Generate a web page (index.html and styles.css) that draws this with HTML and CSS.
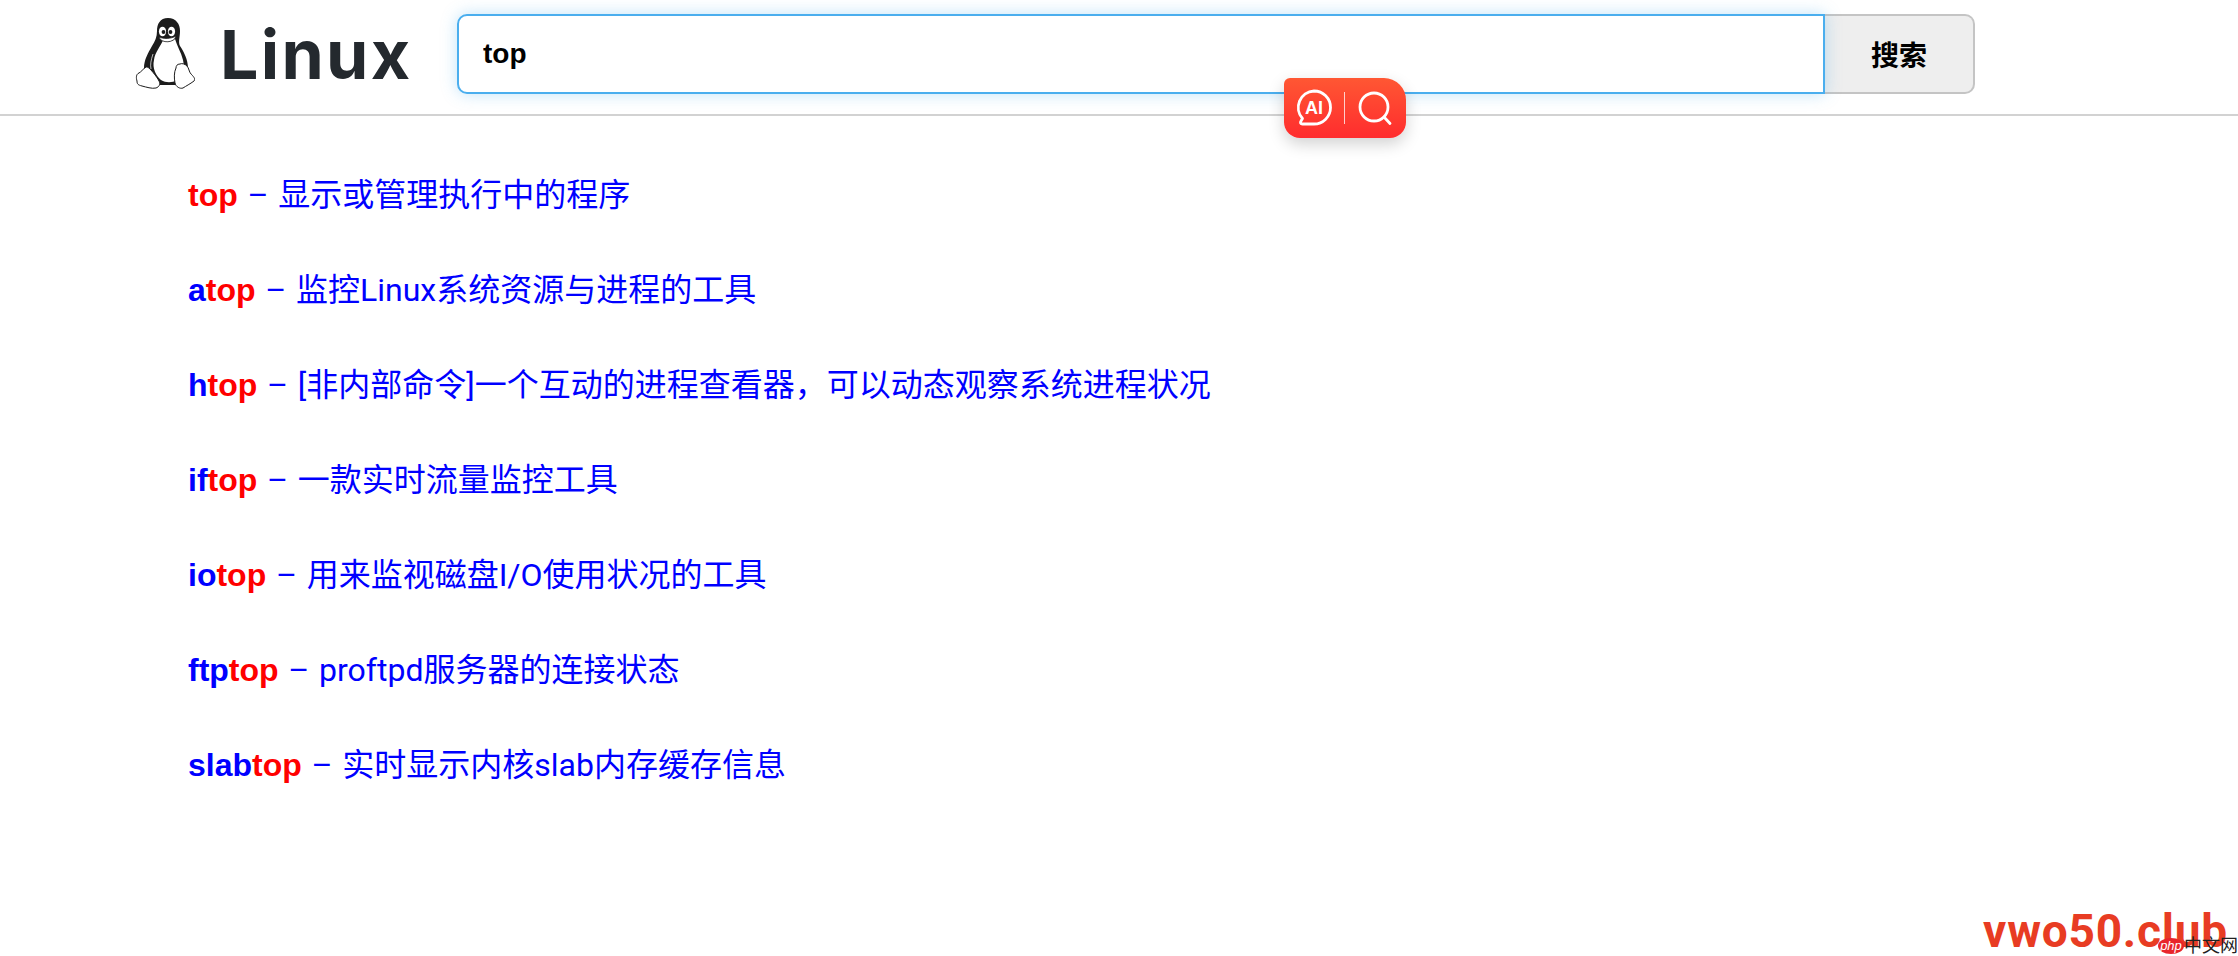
FILE: index.html
```html
<!DOCTYPE html>
<html lang="zh-CN">
<head>
<meta charset="utf-8">
<title>Linux top</title>
<link rel="stylesheet" href="styles.css">
</head>
<body>
<header class="topbar">
  <a class="brand" href="#">
    <svg class="tux" viewBox="5 8 60 72" aria-hidden="true">
      <path d="M38 8C30 8 27 14 27 21c0 6-2 10-5 15-4 7-8 14-8 22l2 4 14 13h17l11-17c0-8-4-16-8-22-2-4 0-9 0-15 0-7-4-13-12-13z" fill="#1c1c1c"/>
      <path d="M33 30c3 2 9 2 12-1 2 7 6 13 8 21 2 8-1 16-6 20-5 3-11 3-16 0-5-4-9-12-7-20 1-8 7-14 9-20z" fill="#fff"/>
      <path d="M23 44c-2 6-3 11-2 15" fill="none" stroke="#fff" stroke-width=".7"/>
      <ellipse cx="32.500" cy="21.500" rx="3.600" ry="4.800" fill="#fff"/>
      <ellipse cx="41.500" cy="21.500" rx="3.600" ry="4.800" fill="#fff"/>
      <circle cx="33.500" cy="22" r="1.900" fill="#1c1c1c"/>
      <circle cx="40.500" cy="22" r="1.900" fill="#1c1c1c"/>
      <path d="M29 27c4 2 12 2 17-1-1 7-15 8-17 1z" fill="#fff" stroke="#1c1c1c" stroke-width=".8"/>
      <path d="M16 57c-3 2-5 5-7 6-3 1-3 5-2 8 0 3 1 4 5 5 4 1 10 3 14 2 3-1 5-4 3-7-2-4-7-10-9-12-2-2-3-2-4-2z" fill="#fff" stroke="#1c1c1c" stroke-width="1"/>
      <path d="M50 54c-3 0-4 2-4 4-2 4-2 10-1 15 1 4 5 6 8 5 3-2 7-4 11-7 2-2-1-5-3-7-2-2-2-6-4-8-2-2-5-3-7-2z" fill="#fff" stroke="#1c1c1c" stroke-width="1"/>
    </svg>
    <h1 class="brand-name">Linux</h1>
  </a>
  <form class="search">
    <input class="search-input" type="text" value="top">
    <button class="search-btn" type="button">搜索</button>
  </form>
</header>
<div class="ai-widget">
  <svg class="ai-bubble" viewBox="0 0 40 40" aria-hidden="true">
    <path d="M20 3a16.500 16.500 0 1 1 0 33H8.500c-2 0-2.500-1.500-1.500-3l1.500-2.500A16.500 16.500 0 0 1 20 3z" fill="none" stroke="#fff" stroke-width="2.800" stroke-linejoin="round"/>
    <text class="ai-text" x="20" y="26" text-anchor="middle">AI</text>
  </svg>
  <span class="ai-sep"></span>
  <svg class="ai-lens" viewBox="0 0 36 36" aria-hidden="true">
    <circle cx="17" cy="17" r="14" fill="none" stroke="#fff" stroke-width="2.800"/>
    <path d="M27 27l6 6.500" stroke="#fff" stroke-width="2.800" stroke-linecap="round"/>
  </svg>
</div>
<main class="results">
  <p class="row"><a href="#"><b class="hit">top</b> – 显示或管理执行中的程序</a></p>
  <p class="row"><a href="#"><b>a</b><b class="hit">top</b> – 监控Linux系统资源与进程的工具</a></p>
  <p class="row"><a href="#"><b>h</b><b class="hit">top</b> – [非内部命令]一个互动的进程查看器，可以动态观察系统进程状况</a></p>
  <p class="row"><a href="#"><b>if</b><b class="hit">top</b> – 一款实时流量监控工具</a></p>
  <p class="row"><a href="#"><b>io</b><b class="hit">top</b> – 用来监视磁盘I/O使用状况的工具</a></p>
  <p class="row"><a href="#"><b>ftp</b><b class="hit">top</b> – proftpd服务器的连接状态</a></p>
  <p class="row"><a href="#"><b>slab</b><b class="hit">top</b> – 实时显示内核slab内存缓存信息</a></p>
</main>
<div class="watermark">
  <span class="wm-site">vwo50.club</span>
  <span class="wm-php"><i class="wm-oval">php</i><span class="wm-cn">中文网</span></span>
</div>
</body>
</html>
```
FILE: styles.css
```css
* { box-sizing: border-box; }
html, body { margin: 0; height: 100%; }
body {
  background: #fff;
  font-family: Roboto, "Noto Sans CJK SC", sans-serif;
  overflow: hidden;
  position: relative;
}
.topbar {
  display: flex;
  align-items: center;
  height: 116px;
  padding: 0 0 6px 135px;
  border-bottom: 2px solid #d2d2d2;
}
.brand {
  display: flex;
  align-items: center;
  gap: 25px;
  width: 322px;
  text-decoration: none;
}
.tux { width: 60px; height: 72px; flex: none; }
.brand-name {
  margin: 0;
  font: 700 68px/76px Inter, "Liberation Sans", sans-serif;
  letter-spacing: 2.3px;
  color: #24292e;
}
.search { display: flex; }
.search-input {
  width: 1368px;
  height: 80px;
  padding: 0 24px;
  border: 2px solid #4aaeee;
  border-radius: 10px 0 0 10px;
  outline: 0;
  box-shadow: 0 0 16px rgba(74, 174, 238, .35);
  font: bold 28px "Liberation Sans", "Noto Sans CJK SC", sans-serif;
  color: #000;
  position: relative;
}
.search-btn {
  width: 150px;
  height: 80px;
  border: 2px solid #c4c4c4;
  border-left: 0;
  border-radius: 0 10px 10px 0;
  background: #eee;
  font: bold 28px "Liberation Sans", "Noto Sans CJK SC", sans-serif;
  color: #000;
}
.ai-widget {
  position: absolute;
  left: 1284px;
  top: 78px;
  width: 122px;
  height: 60px;
  display: flex;
  align-items: center;
  padding-left: 10px;
  border-radius: 6px 22px 16px 16px;
  background: linear-gradient(#ff5733, #ff2c2e);
  box-shadow: 0 6px 16px rgba(0, 0, 0, .18);
}
.ai-bubble { width: 40px; height: 40px; flex: none; }
.ai-text { font: bold 18px "Liberation Sans", sans-serif; fill: #fff; }
.ai-sep { width: 1px; height: 32px; margin: 0 12px 0 10px; background: rgba(255,255,255,.75); flex: none; }
.ai-lens { width: 36px; height: 36px; flex: none; }
.results { padding: 32px 0 0 188px; }
.row { margin: 0; height: 95px; font-size: 32px; line-height: 95px; word-spacing: 1.8px; }
.row a { color: #00f; text-decoration: none; }
.row b { font-family: "Liberation Sans", "Noto Sans CJK SC", sans-serif; font-kerning: none; }
.hit { color: #f00; }
.watermark {
  position: absolute;
  right: 0;
  bottom: 0;
  width: 256px;
  height: 49px;
}
.wm-site {
  position: absolute;
  right: 10px;
  top: 0;
  font: bold 46px/48px Roboto, sans-serif;
  letter-spacing: .8px;
  color: #e83c23;
  white-space: nowrap;
}
.wm-php { position: absolute; right: 0; bottom: 1px; display: flex; align-items: center; }
.wm-oval {
  width: 26px; height: 16px;
  border-radius: 50%;
  background: #e8252b;
  color: #fff;
  font: italic 13px/15px "Liberation Sans", sans-serif;
  text-align: center;
}
.wm-cn { font-size: 18px; line-height: 18px; color: #222; }
```
